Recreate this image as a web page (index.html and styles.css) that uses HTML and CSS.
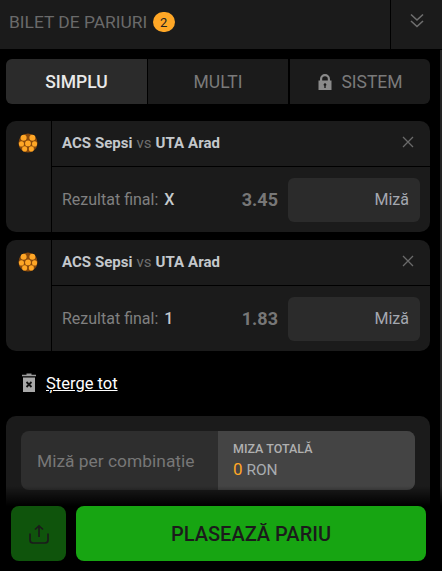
FILE: index.html
```html
<!DOCTYPE html>
<html lang="ro">
<head>
<meta charset="utf-8">
<title>Bilet de pariuri</title>
<link rel="stylesheet" href="styles.css">
</head>
<body>
<div class="app">
  <header class="header">
    <div class="title">BILET DE PARIURI <span class="badge">2</span></div>
    <div class="collapse">
      <svg width="18" height="18" viewBox="0 0 18 18" fill="none" stroke="#6f6f6f" stroke-width="1.6"><path d="M3 2.500 9 8l6-5.500M3 9l6 5.500L15 9"/></svg>
    </div>
  </header>
  <div class="scrollbar"></div>
  <main class="content">
    <nav class="tabs">
      <div class="tab active">SIMPLU</div>
      <div class="tab">MULTI</div>
      <div class="tab">
        <svg class="lock" width="16" height="16" viewBox="0 0 16 16"><path fill="#8a8a8a" fill-rule="evenodd" d="M3 6.500V5a5 5 0 0 1 10 0v1.500h1.500V16h-13V6.500zM5.200 6.500h5.600V5a2.800 2.800 0 0 0-5.600 0zM8 9.200a1.400 1.400 0 0 0-.7 2.600V14h1.400v-2.200A1.400 1.400 0 0 0 8 9.200z"/></svg>
        SISTEM
      </div>
    </nav>

    <section class="bet">
      <div class="sport">
        <svg width="20" height="20" viewBox="0 0 22 22"><circle cx="11" cy="11" r="10.500" fill="#8a4a0c"/><g fill="#ffa726"><circle cx="11" cy="11.500" r="3.200"/><circle cx="6.200" cy="5.300" r="3.300"/><circle cx="15.800" cy="5.300" r="3.300"/><circle cx="3.800" cy="12" r="2.800"/><circle cx="18.200" cy="12" r="2.800"/><circle cx="7.300" cy="17.500" r="2.800"/><circle cx="14.700" cy="17.500" r="2.800"/></g></svg>
      </div>
      <div class="bet-body">
        <div class="match">
          <span class="teams">ACS Sepsi <span class="vs">vs</span> UTA Arad</span>
          <svg class="close" width="12" height="12" viewBox="0 0 12 12" stroke="#6a6a6a" stroke-width="1.300"><path d="M1 1l10 10M11 1 1 11"/></svg>
        </div>
        <div class="pick">
          <span class="market">Rezultat final: <b>X</b></span>
          <span class="odds">3.45</span>
          <div class="stake">Miză</div>
        </div>
      </div>
    </section>

    <section class="bet">
      <div class="sport">
        <svg width="20" height="20" viewBox="0 0 22 22"><circle cx="11" cy="11" r="10.500" fill="#8a4a0c"/><g fill="#ffa726"><circle cx="11" cy="11.500" r="3.200"/><circle cx="6.200" cy="5.300" r="3.300"/><circle cx="15.800" cy="5.300" r="3.300"/><circle cx="3.800" cy="12" r="2.800"/><circle cx="18.200" cy="12" r="2.800"/><circle cx="7.300" cy="17.500" r="2.800"/><circle cx="14.700" cy="17.500" r="2.800"/></g></svg>
      </div>
      <div class="bet-body">
        <div class="match">
          <span class="teams">ACS Sepsi <span class="vs">vs</span> UTA Arad</span>
          <svg class="close" width="12" height="12" viewBox="0 0 12 12" stroke="#6a6a6a" stroke-width="1.300"><path d="M1 1l10 10M11 1 1 11"/></svg>
        </div>
        <div class="pick">
          <span class="market">Rezultat final: <b>1</b></span>
          <span class="odds">1.83</span>
          <div class="stake">Miză</div>
        </div>
      </div>
    </section>

    <div class="clear">
      <svg width="16" height="20" viewBox="0 0 16 20"><path fill="#9a9a9a" d="M1 1.800h4.500V.6h5v1.200H15v1.500H1z"/><path fill="#a8a8a8" d="M2 4.500h12V19H2z"/><path stroke="#111" stroke-width="1.800" d="m5.500 9 5 5m0-5-5 5"/></svg>
      <a class="clear-link" href="#">Șterge tot</a>
    </div>

    <section class="summary">
      <div class="summary-box">
        <div class="per">Miză per combinație</div>
        <div class="total">
          <div class="total-label">MIZA TOTALĂ</div>
          <div class="total-value"><span class="zero">0</span> RON</div>
        </div>
      </div>
    </section>
  </main>
  <footer class="footer">
    <div class="fade"></div>
    <div class="actions">
      <button class="share">
        <svg width="22" height="22" viewBox="0 0 22 22" fill="none" stroke="#1b1b1b" stroke-width="1.700"><path d="M11 14V3M7 6.500 11 2.800l4 3.700M2 10.500V17a3 3 0 0 0 3 3h12a3 3 0 0 0 3-3v-6.500"/></svg>
      </button>
      <button class="place">PLASEAZĂ PARIU</button>
    </div>
  </footer>
</div>
</body>
</html>
```

FILE: styles.css
```css
* { box-sizing: border-box; }
html, body { margin: 0; height: 100%; background: #000; }
body { font-family: Roboto, "Liberation Sans", sans-serif; overflow: hidden; }
.app { position: relative; width: 442px; height: 571px; overflow: hidden; background: #000; }

.header { display: flex; height: 49px; background: #1b1b1b; }
.title { flex: 1; display: flex; align-items: center; gap: 1px; padding: 0 0 5px 9px; font-size: 17.4px; color: #6a6a6a; white-space: pre; }
.badge { width: 22px; height: 20px; border-radius: 10px; background: #ffa726; color: #222; font-size: 13px; display: flex; align-items: center; justify-content: center; }
.collapse { width: 52px; border-left: 1px solid #000; display: flex; align-items: center; justify-content: center; padding-bottom: 8px; }

.scrollbar { position: absolute; right: 0; top: 50px; width: 2px; height: 521px; background: #222; }

.content { padding: 10px 12px 0 6px; }

.tabs { display: flex; gap: 1px; height: 45px; border-radius: 6px; overflow: hidden; }
.tab { flex: 1; background: #1b1b1b; color: #7a7a7a; font-size: 17.5px; display: flex; align-items: center; justify-content: center; gap: 8px; }
.tab + .tab + .tab { margin-left: 1px; }
.tab.active { flex: 0 0 141px; background: #2b2b2b; color: #e9e9e9; font-weight: 500; }

.bet { display: flex; height: 111px; margin-bottom: 8px; background: #1b1b1b; border-radius: 10px; overflow: hidden; }
.tabs + .bet { margin-top: 17px; }
.sport { width: 46px; border-right: 1px solid #000; display: flex; justify-content: center; align-items: flex-start; padding-top: 12px; padding-right: 1px; }
.bet-body { flex: 1; display: flex; flex-direction: column; min-width: 0; }
.match { height: 46px; border-bottom: 1px solid #000; display: flex; align-items: center; justify-content: space-between; padding: 0 16px 2px 10px; }
.teams { font-size: 15px; font-weight: 700; color: #c4c8cc; word-spacing: 0.3px; }
.vs { font-weight: 400; color: #6e6e6e; }
.close { display: block; margin-bottom: 2px; }
.pick { flex: 1; display: flex; align-items: center; padding: 0 10px 0 10px; }
.market { flex: 1; font-size: 16px; color: #808080; }
.market b { font-weight: 500; color: #c6cacd; margin-left: 2px; }
.odds { font-size: 18px; font-weight: 700; color: #777; margin-right: 10px; }
.stake { width: 132px; height: 44px; background: #2b2b2b; border-radius: 6px; display: flex; align-items: center; justify-content: flex-end; padding-right: 11px; font-size: 16px; color: #a4a8b0; }

.clear { display: flex; align-items: center; gap: 9px; height: 20px; margin: 22px 0 23px 15px; }
.clear svg { display: block; }
.clear-link { color: #fff; font-size: 16.5px; }

.summary { height: 130px; padding: 15px 15px; background: #1b1b1b; border-radius: 10px; }
.summary-box { display: flex; height: 59px; background: #2e2e2e; border-radius: 8px; overflow: hidden; }
.per { width: 197px; padding: 0 0 0 16px; display: flex; align-items: center; font-size: 17.4px; color: #777; }
.total { flex: 1; background: #444; padding: 10px 15px 0; }
.total-label { font-size: 12.5px; font-weight: 500; line-height: 15px; color: #b0b0b0; }
.total-value { font-size: 15.5px; line-height: 20px; margin-top: 3px; color: #a8acb0; }
.zero { font-size: 17px; color: #ffa726; }

.footer { position: absolute; left: 0; right: 0; bottom: 0; }
.fade { height: 20px; background: linear-gradient(to bottom, rgba(0,0,0,0), #000); }
.actions { display: flex; gap: 10px; padding: 0 16px 10px 11px; background: #000; height: 65px; }
.share { width: 55px; height: 55px; border: 0; padding: 0; background: #0f540c; border-radius: 8px; display: flex; align-items: center; justify-content: center; }
.place { flex: 1; height: 55px; border: 0; background: #17a512; border-radius: 8px; color: #1b1b1b; font: 500 20px Roboto, "Liberation Sans", sans-serif; }
```
